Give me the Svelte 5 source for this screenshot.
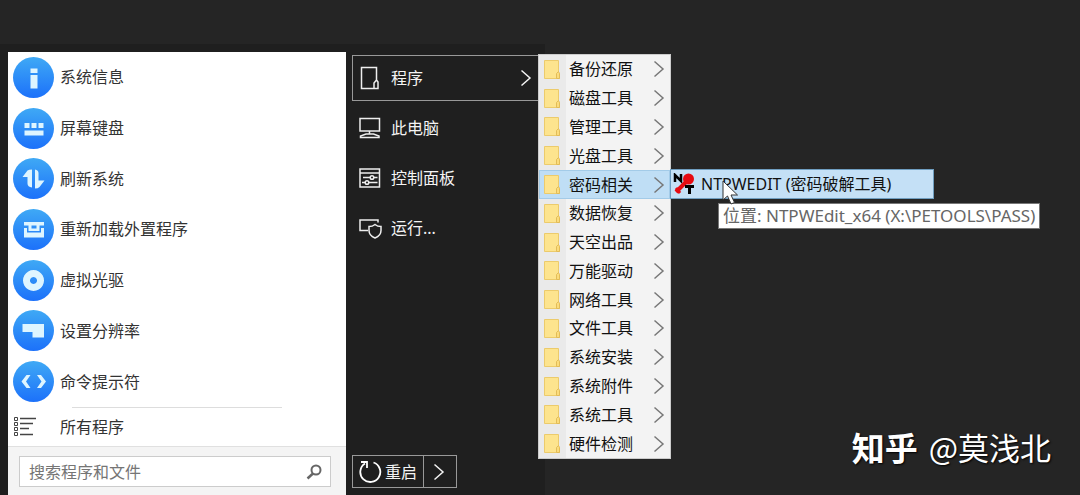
<script>
  const pinned = [
    { label: '系统信息', d: 'M17.5 11.5h7v4.5h-7zM17.5 18h7v13.5h-7z' },
    { label: '屏幕键盘', d: 'M11.5 15h5v5h-5zM18.5 15h5v5h-5zM25.5 15h5v5h-5zM11.5 22.5h19v5h-19z' },
    { label: '刷新系统', d: 'M19 11.5V29.5Q14.5 29 14.5 25.5V19H9.5L14.5 12.5Q16 11.5 19 11.5ZM22 11.5Q25.5 12 25.5 15V22.5H31.5L26.5 29Q25 30.5 22 30.5Z' },
    { label: '重新加载外置程序', d: 'M11 13h20v3.5h-4.5V22h-11v-5.500H11zM11 19h3v4.500h14V19h3v9.500H11zM18.500 16.500v3h5v-3z' },
    { label: '虚拟光驱', d: 'M20.5 10a10.5 10.5 0 1 0 .01 0zM20.5 17a3.5 3.5 0 1 1-.01 0z' },
    { label: '设置分辨率', d: 'M9.5 14H31v13.5H19.5v-5.5h-10z' },
    { label: '命令提示符', d: 'M17.5 14h-4L8.5 20.5l5 6.5h4l-4.5-6.5zM24 14h4l5 6.5-5 6.5h-4l4.5-6.5z' },
  ];

  const places = [
    { label: '程序', icon: 'programs', open: true },
    { label: '此电脑', icon: 'computer' },
    { label: '控制面板', icon: 'control' },
    { label: '运行...', icon: 'run' },
  ];

  const folders = [
    '备份还原', '磁盘工具', '管理工具', '光盘工具', '密码相关', '数据恢复', '天空出品',
    '万能驱动', '网络工具', '文件工具', '系统安装', '系统附件', '系统工具', '硬件检测',
  ];

  let active = $state('密码相关');
  let query = $state('');
</script>

{#snippet chevron()}
  <svg class="chevron" viewBox="0 0 12 18" width="12" height="18" aria-hidden="true">
    <path d="M1.5 1.5L10 9l-8.5 7.5" />
  </svg>
{/snippet}

<main class="desktop">
  <section class="start-menu">
    <div class="left-pane">
      <ul class="pinned">
        {#each pinned as item}
          <li>
            <button class="pinned-item">
              <svg viewBox="0 0 41 41" width="41" height="41" aria-hidden="true">
                <defs>
                  <linearGradient id="disc" x1="0" y1="0" x2="0" y2="1">
                    <stop offset="0" stop-color="#3fa9f5" />
                    <stop offset="1" stop-color="#1c71fa" />
                  </linearGradient>
                </defs>
                <circle cx="20.5" cy="20.5" r="20.5" fill="url(#disc)" />
                <path d={item.d} fill="#def5ff" fill-rule="evenodd" />
              </svg>
              {item.label}
            </button>
          </li>
        {/each}
      </ul>

      <button class="all-programs">
        <svg viewBox="0 0 24 22" width="24" height="22" fill="none" stroke="#444" aria-hidden="true">
          <path d="M1.5 1.5h3v3h-3zM1.5 6.5h3v3h-3zM1.5 11.5h3v3h-3zM1.5 16.5h3v3h-3z" />
          <path d="M7 2.5h16M7 7.5h13M7 12.5h9M7 18.5h13" stroke-width="1.5" />
        </svg>
        所有程序
      </button>

      <form class="search">
        <div class="search-box">
          <input type="text" aria-label="搜索程序和文件" placeholder="搜索程序和文件" bind:value={query} />
          <svg viewBox="0 0 16 16" width="16" height="16" fill="none" stroke="#666" aria-hidden="true">
            <circle cx="10" cy="6" r="4.5" stroke-width="2" />
            <path d="M7 9.5L1.5 14.5" stroke-width="2.5" />
          </svg>
        </div>
      </form>
    </div>

    <div class="right-pane">
      <nav class="places">
        {#each places as place}
          <button class="place" class:open={place.open}>
            <svg viewBox="0 0 24 24" width="24" height="24" fill="none" stroke="#eee" stroke-width="1.5" aria-hidden="true">
              {#if place.icon === 'programs'}
                <path d="M18.5 14V1.5h-15v21h12M16 22.5V17l2.5-3 1.5 2v6.5z" />
              {:else if place.icon === 'computer'}
                <path d="M2 2.5h19.5V15H2zM11.5 15v3M8 18h7.5l5.5 2v1.5H2.5V20z" />
              {:else if place.icon === 'control'}
                <path d="M2 3h19.5v18H2zM2 7h19M5 11.5h7M16 11.5h3.5M4 16.5h3M11 16.5h8.5" />
                <circle cx="14" cy="11.5" r="1.8" />
                <circle cx="9" cy="16.5" r="1.8" />
              {:else}
                <path d="M10 14.5H2V4h18v2.5M17 8.5q-2.5 2-6 2v4q0 5 6 7.5 6-2.5 6-7.5v-4q-3.5 0-6-2z" />
              {/if}
            </svg>
            {place.label}
            {#if place.open}{@render chevron()}{/if}
          </button>
        {/each}
      </nav>

      <div class="power">
        <button class="restart">
          <svg viewBox="0 0 24 24" width="24" height="24" fill="none" stroke="#fff" stroke-width="1.8" aria-hidden="true">
            <path d="M15.5 2.5A10 10 0 1 1 7 3.5" />
            <path d="M3 2h6v6" />
          </svg>
          重启
        </button>
        <button class="more" aria-label="更多">{@render chevron()}</button>
      </div>
    </div>

    <ul class="submenu">
      {#each folders as name}
        <li class:active={name === active}>
          <button class="folder" onmouseenter={() => (active = name)}>
            <svg viewBox="0 0 18 21" width="18" height="21" aria-hidden="true">
              <path d="M1.5 1.5h14v12l1 1v5h-15z" fill="#fde48e" stroke="#eccb6b" />
              <path d="M13.5 19.5v-5l2-2 1 2v5z" fill="#fbdc7c" stroke="#e2bc58" />
            </svg>
            {name}
            {@render chevron()}
          </button>
          {#if name === '密码相关' && name === active}
            <div class="flyout">
              <button class="tool">
                <svg viewBox="0 0 22 22" width="22" height="22" fill="none" aria-hidden="true">
                  <path d="M2 9V2l6 6V1" stroke="#000" stroke-width="2.5" />
                  <path d="M3 19L14 8" stroke="#e60b12" stroke-width="4" />
                  <path d="M3 15l4 5" stroke="#e60b12" stroke-width="3" />
                  <circle cx="15.5" cy="6" r="5.5" fill="#e60b12" />
                  <path d="M12 13.5h9M16.5 13v8" stroke="#000" stroke-width="3" />
                </svg>
                NTPWEDIT (密码破解工具)
              </button>
              <svg class="cursor" viewBox="0 0 17 25" width="17" height="25" aria-hidden="true">
                <path d="M1 1v19l4.5-4 3.5 8 3.5-1.5-3.5-7.5h6.5z" fill="#fff" stroke="#333" />
              </svg>
              <div class="tooltip" role="tooltip">位置: NTPWEdit_x64 (X:\PETOOLS\PASS)</div>
            </div>
          {/if}
        </li>
      {/each}
    </ul>
  </section>

  <p class="watermark"><b>知乎</b> <span>@莫浅北</span></p>
</main>

<style>
  :global(body) {
    background: #252525;
  }

  .desktop {
    position: relative;
    display: flex;
    min-height: 100vh;
    box-sizing: border-box;
    padding-top: 44px;
    background: #252525;
    overflow: hidden;
    font: 16px/24px "Noto Sans", "Noto Sans CJK SC", sans-serif;
  }

  button,
  input {
    border: 0;
    padding: 0;
    background: none;
    color: inherit;
    font: inherit;
    text-align: left;
  }

  ul {
    margin: 0;
    padding: 0;
    list-style: none;
  }

  svg {
    flex: none;
  }

  .start-menu {
    position: relative;
    display: flex;
    padding: 8px 0 0 8px;
    background: #1f1f1f;
  }

  .left-pane {
    display: flex;
    flex-direction: column;
    width: 338px;
    background: #fff;
    color: #333;
  }

  .pinned {
    flex: 1;
    display: grid;
    grid-auto-rows: 1fr;
  }

  .pinned-item {
    display: flex;
    align-items: center;
    gap: 6px;
    width: 100%;
    height: 100%;
    padding-left: 5px;
  }

  .all-programs {
    display: flex;
    align-items: center;
    gap: 23px;
    height: 39px;
    padding-left: 5px;
    position: relative;
  }

  .all-programs::before {
    content: "";
    position: absolute;
    top: 0;
    left: 64px;
    right: 64px;
    border-top: 1px solid #ddd;
  }

  .search {
    padding: 9px 15px 8px 11px;
    border-top: 1px solid #e0e0e0;
    background: #f4f4f4;
  }

  .search-box {
    display: flex;
    align-items: center;
    height: 29px;
    padding: 0 8px 0 9px;
    border: 1px solid #ccc;
    background: #fff;
  }

  .search-box input {
    flex: 1;
    min-width: 0;
    outline: 0;
  }

  .search-box input::placeholder {
    color: #757575;
  }

  .right-pane {
    display: flex;
    flex-direction: column;
    justify-content: space-between;
    width: 193px;
    padding: 3px 0 7px 6px;
    color: #f4f4f4;
  }

  .places {
    display: grid;
    gap: 4px;
  }

  .place {
    display: flex;
    align-items: center;
    gap: 9px;
    height: 46px;
    box-sizing: border-box;
    padding: 0 12px 0 5px;
    border: 1px solid transparent;
  }

  .place.open {
    border-color: #999;
  }

  .chevron {
    margin-left: auto;
    fill: none;
    stroke: currentColor;
    stroke-width: 1.5;
  }

  .power {
    display: flex;
    align-self: flex-start;
    border: 1px solid #999;
  }

  .restart {
    display: flex;
    align-items: center;
    gap: 3px;
    height: 31px;
    padding: 0 6px 0 5px;
  }

  .more {
    display: flex;
    align-items: center;
    padding: 0 11px 0 9px;
    border-left: 1px solid #999;
  }

  .submenu {
    position: absolute;
    z-index: 1;
    top: 10px;
    bottom: 36px;
    left: 538px;
    display: grid;
    grid-auto-rows: 1fr;
    width: 131px;
    border: 1px solid #ccc;
    background: linear-gradient(to right, #eaeaea 27px, #f3f3f3 27px);
    color: #111;
  }

  .submenu li {
    position: relative;
    min-height: 0;
  }

  .submenu li.active {
    background: #bfdef5;
    box-shadow: inset 0 0 0 1px #a3cbe8;
  }

  .folder {
    display: flex;
    align-items: center;
    gap: 8px;
    width: 100%;
    height: 100%;
    padding: 0 5px 0 4px;
  }

  .folder .chevron {
    color: #777;
  }

  .flyout {
    position: absolute;
    top: -1px;
    left: 100%;
  }

  .tool {
    display: flex;
    align-items: center;
    gap: 6px;
    width: 264px;
    height: 30px;
    box-sizing: border-box;
    padding-left: 2px;
    border: 1px solid #6f9ec0;
    background: #c4e0f6;
    white-space: nowrap;
  }

  .cursor {
    position: absolute;
    z-index: 1;
    top: 11px;
    left: 52px;
  }

  .tooltip {
    position: absolute;
    top: 34px;
    left: 48px;
    padding: 0 4px;
    border: 1px solid #777;
    background: #fff;
    color: #666;
    font-size: 17px;
    white-space: nowrap;
  }

  .watermark {
    position: absolute;
    right: 29px;
    bottom: 26px;
    display: flex;
    gap: 11px;
    margin: 0;
    color: #fff;
    font: 31px/44px "Noto Sans CJK SC", sans-serif;
    text-shadow: 1px 1px 2px #000;
  }

  .watermark b {
    font-size: 33px;
  }
</style>
